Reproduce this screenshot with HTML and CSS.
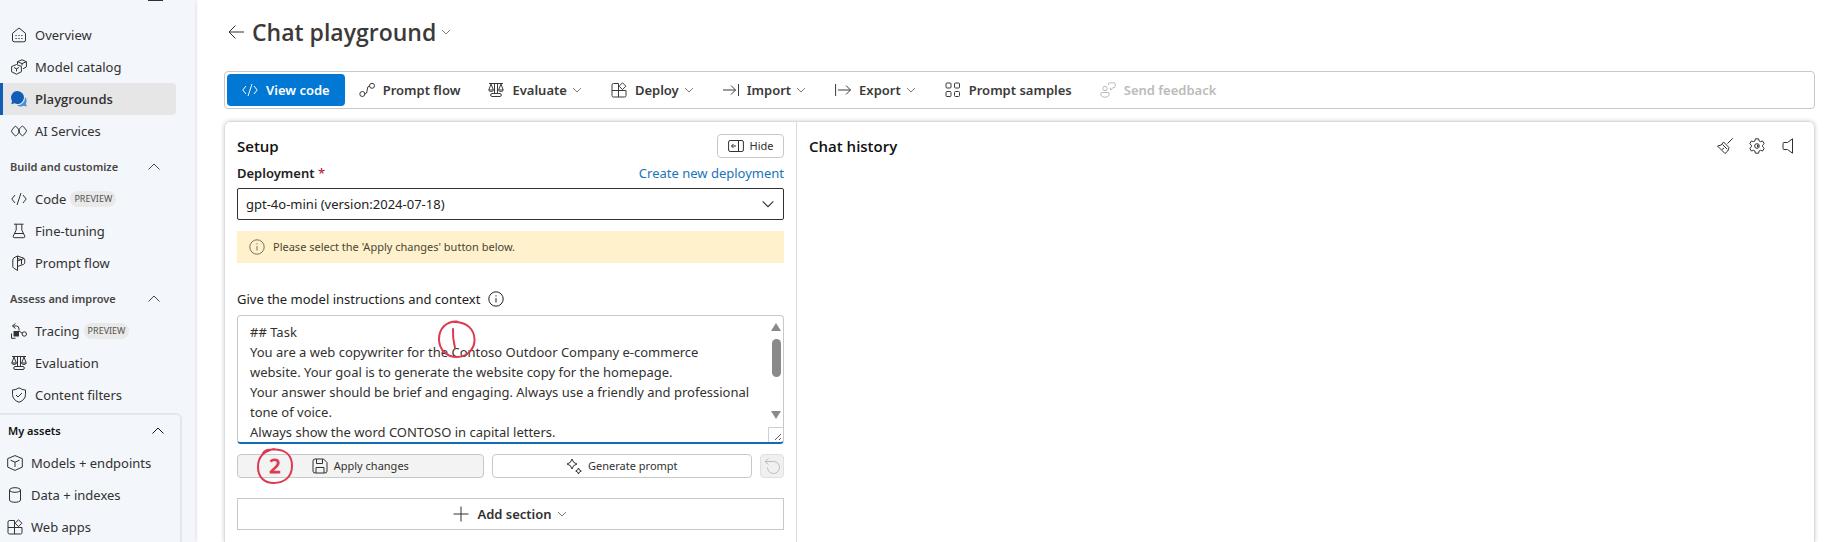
FILE: index.html
```html
<!DOCTYPE html>
<html lang="en">
<head>
<meta charset="utf-8">
<title>Chat playground</title>
<link rel="stylesheet" href="styles.css">
</head>
<body>
<svg class="defs" aria-hidden="true">
  <symbol id="chev-down" viewBox="0 0 12 12"><path d="M2 4l4 4 4-4"/></symbol>
  <symbol id="chev-up" viewBox="0 0 12 12"><path d="M.5 8.5L6 3l5.500 5.500"/></symbol>
  <symbol id="code" viewBox="0 0 16 16"><path d="M4 4L.8 8 4 12M12 4l3.200 4L12 12M10 2L6 14"/></symbol>
  <symbol id="scales" viewBox="0 0 16 16"><path d="M1 1.500h14M6.500 1.500v10M9.500 1.500v10M3 2L.8 8h4.600L3 2zM13 2l-2.400 6h4.600L13 2zM.8 8c0 2 4.600 2 4.600 0M10.600 8c0 2 4.600 2 4.600 0M4 11.500h8c1.800 0 1.800 3 0 3H4c-1.800 0-1.800-3 0-3z"/></symbol>
  <symbol id="apps" viewBox="0 0 16 16"><path d="M7.500 1.500h-5Q1 1.500 1 3v10.500Q1 15 2.500 15h11q1.500 0 1.500-1.500V8.500H1M7.500 1.500V15M11.500.8l3.400 3.400-3.400 3.400-3.400-3.400z"/></symbol>
  <symbol id="info" viewBox="0 0 16 16"><circle cx="8" cy="8" r="7.200"/><path d="M8 7v4.500M8 4.300v1.200"/></symbol>
</svg>
<div class="shell">
  <nav class="sidebar" aria-label="Project">
    <div class="sidebar-top"><span class="collapse-mark"></span></div>
    <a class="nav-item" href="#"><svg class="icon" viewBox="0 0 16 16"><path d="M1.500 6.300L8 1l6.500 5.300V13q0 1.800-1.800 1.800H3.300Q1.500 14.800 1.500 13z"/><path d="M4.500 8.500h1.200M7.400 8.500h1.200M10.300 8.500h1.200M4.500 11.500h1.200M7.400 11.500h1.200M10.300 11.500h1.200"/></svg>Overview</a>
    <a class="nav-item" href="#"><svg class="icon" viewBox="0 0 16 16"><path d="M.6 7.500L5.500 5.500l4.900 2v5.300l-4.900 2.400-4.900-2.400zM3 8.500l2.500 1.300L8 8.500M5.500 9.800v2.500M6.500 5V2.700L11 .8l4.400 1.900v5.200L12 9.800M6.500 2.700L11 4.600l4.400-1.900M11 4.600v2"/></svg>Model catalog</a>
    <a class="nav-item selected" href="#" aria-current="page"><svg class="icon" viewBox="0 0 16 16"><path class="fill" d="M6.500 0a6.500 6.500 0 1 1-3 12.300L.2 13.200l.9-3.200A6.500 6.500 0 0 1 6.500 0z"/><path class="fill pale" d="M14 6a6 6 0 0 1 1 6.500l.8 3-3.100-.8A6.500 6.500 0 0 1 6 14.300 7.600 7.600 0 0 0 14 6z"/></svg>Playgrounds</a>
    <a class="nav-item" href="#"><svg class="icon" viewBox="0 0 16 16"><path d="M6.500 11.500L5.300 12.500q-.8.600-1.600 0L.8 9q-.6-.9 0-1.800l2.900-3.600q.8-.7 1.600 0l3 3.600q.6.900 0 1.800zM9.500 4.500l1.200-1q.8-.6 1.600 0L15.200 7q.6.900 0 1.800l-2.900 3.600q-.8.700-1.600 0l-3-3.600q-.6-.9 0-1.800z"/></svg>AI Services</a>
    <button class="nav-head" type="button">Build and customize<svg class="caret"><use href="#chev-up"/></svg></button>
    <a class="nav-item" href="#"><svg class="icon"><use href="#code"/></svg>Code<span class="tag">PREVIEW</span></a>
    <a class="nav-item" href="#"><svg class="icon" viewBox="0 0 16 16"><path d="M3 1.200h9.500M5.200 1.200V7l-3 6.200q-.3 1.200.9 1.500h9.800q1.200-.3.900-1.500l-3-6.200V1.200M3.600 10.500h8.800"/></svg>Fine-tuning</a>
    <a class="nav-item" href="#"><svg class="icon" viewBox="0 0 16 16"><path d="M6.500 1L3 2.800Q1.800 3.500 1.800 5v6.500q0 1 .8 1.500L6.500 15.500zM6.500 1l6.200 2.200q1 .3 1 1.500v3.100q0 1-1 1.500L6.500 11.500M6.500 6L13 3.500M6.500 3.500l4 1.400v4.500"/></svg>Prompt flow</a>
    <button class="nav-head" type="button">Assess and improve<svg class="caret"><use href="#chev-up"/></svg></button>
    <a class="nav-item" href="#"><svg class="icon" viewBox="0 0 16 16"><path d="M4.500.5L1.500 3l3 2.500M1.500 3h4q2.500 0 2.500 3v1.500M8 8l3.500 2.500M.5 10.500v4.800h4"/><circle cx="13.300" cy="11" r="2.200"/><path class="fill dark" d="M2.500 8h5.500v5.500H2.500z"/></svg>Tracing<span class="tag">PREVIEW</span></a>
    <a class="nav-item" href="#"><svg class="icon"><use href="#scales"/></svg>Evaluation</a>
    <a class="nav-item" href="#"><svg class="icon" viewBox="0 0 16 16"><path d="M8 .8q3 2.200 6.500 2.200v4.500q0 5.300-6.500 7.800Q1.500 12.800 1.500 7.500V3Q5 3 8 .8zM5 8l2 2 4-4"/></svg>Content filters</a>
    <section class="assets">
      <button class="nav-head" type="button">My assets<svg class="caret"><use href="#chev-up"/></svg></button>
      <a class="nav-item" href="#"><svg class="icon" viewBox="0 0 16 16"><path d="M8 .6l7.300 3v8.500L8 15.400.7 12.100V3.600zM3.500 5.200L8 7.200l4.500-2M8 7.200V12"/></svg>Models + endpoints</a>
      <a class="nav-item" href="#"><svg class="icon" viewBox="0 0 16 16"><ellipse cx="8" cy="3" rx="5.500" ry="2.300"/><path d="M2.500 3v10c0 3 11 3 11 0V3"/></svg>Data + indexes</a>
      <a class="nav-item" href="#"><svg class="icon"><use href="#apps"/></svg>Web apps</a>
    </section>
  </nav>

  <main class="main">
    <header class="title-row">
      <button class="back" type="button" aria-label="Back"><svg class="icon" viewBox="0 0 16 16"><path d="M7.500 1.500L1 8l6.500 6.500M1 8h15"/></svg></button>
      <h1>Chat playground</h1>
      <svg class="chev"><use href="#chev-down"/></svg>
    </header>

    <div class="toolbar" role="toolbar">
      <button class="tool primary" type="button"><svg class="icon"><use href="#code"/></svg>View code</button>
      <button class="tool" type="button"><svg class="icon" viewBox="0 0 16 16"><circle cx="3.300" cy="12" r="2.500"/><circle cx="13" cy="3.800" r="2.500"/><path d="M5.800 12q2.400 0 2.400-4t2.400-4.200"/></svg>Prompt flow</button>
      <button class="tool" type="button"><svg class="icon"><use href="#scales"/></svg>Evaluate<svg class="chev"><use href="#chev-down"/></svg></button>
      <button class="tool" type="button"><svg class="icon"><use href="#apps"/></svg>Deploy<svg class="chev"><use href="#chev-down"/></svg></button>
      <button class="tool" type="button"><svg class="icon" viewBox="0 0 16 16"><path d="M0 8h12.500M8 3.500L12.500 8 8 12.500M15.500 2v12"/></svg>Import<svg class="chev"><use href="#chev-down"/></svg></button>
      <button class="tool" type="button"><svg class="icon" viewBox="0 0 16 16"><path d="M.6 2v12M3 8h12.500M11 3.500L15.500 8 11 12.500"/></svg>Export<svg class="chev"><use href="#chev-down"/></svg></button>
      <button class="tool" type="button"><svg class="icon" viewBox="0 0 16 16"><rect x="1" y="1" width="5" height="5" rx="1"/><rect x="9.500" y="1" width="5" height="5" rx="1"/><rect x="1" y="9.500" width="5" height="5" rx="1"/><rect x="9.500" y="9.500" width="5" height="5" rx="1"/></svg>Prompt samples</button>
      <button class="tool" type="button" disabled><svg class="icon" viewBox="0 0 16 16"><circle cx="5" cy="6.500" r="2.200"/><path d="M2 10.500h6q1.200 0 1.200 1.200 0 3.500-4.200 3.500T.8 11.700Q.8 10.500 2 10.500zM8.500 3V2q0-1.200 1.200-1.200H14q1.200 0 1.200 1.200v2.500q0 1.200-1.200 1.200h-1L10.500 8V5.700"/></svg>Send feedback</button>
    </div>

    <div class="card">
      <section class="setup">
        <div class="row">
          <h2>Setup</h2>
          <button class="small-btn hide" type="button"><svg class="icon" viewBox="0 0 16 16"><rect x=".6" y="2.500" width="14.800" height="11" rx="1.500"/><path d="M10.500 2.500v11M3.500 8H8M5.500 6L3.500 8l2 2"/></svg>Hide</button>
        </div>
        <div class="row deploy-row">
          <label class="field-label" for="deployment">Deployment <span class="req">*</span></label>
          <a class="link" href="#">Create new deployment</a>
        </div>
        <div class="select-wrap">
          <select id="deployment"><option>gpt-4o-mini (version:2024-07-18)</option></select>
          <svg class="select-caret"><use href="#chev-down"/></svg>
        </div>
        <div class="notice" role="status"><svg class="icon"><use href="#info"/></svg>Please select the 'Apply changes' button below.</div>
        <div class="prompt-label"><label for="instructions">Give the model instructions and context</label><svg class="icon"><use href="#info"/></svg></div>
        <div class="prompt-box">
          <textarea id="instructions" rows="6">## Task
You are a web copywriter for the Contoso Outdoor Company e-commerce
website. Your goal is to generate the website copy for the homepage.
Your answer should be brief and engaging. Always use a friendly and professional
tone of voice.
Always show the word CONTOSO in capital letters.</textarea>
          <div class="scrollbar" aria-hidden="true"><span class="arrow up"></span><span class="thumb"></span><span class="arrow down"></span></div>
          <svg class="grip" viewBox="0 0 15 15" aria-hidden="true"><path class="grip-edge" d="M.5 15V.5H15"/><path d="M7 13l6-6M11 13l2-2"/></svg>
          <svg class="mark mark-one" viewBox="0 0 40 40" role="img" aria-label="Step 1"><path d="M20 2.500C9 2 2 10 2 20s7 18 18 18 18-9 17.500-18S31 3 17 3"/><path d="M16 10q-.5 9 2 19"/></svg>
        </div>
        <div class="actions">
          <button class="small-btn apply" type="button"><svg class="icon" viewBox="0 0 16 16"><path d="M1 3q0-2 2-2h8.500L15 4.500V13q0 2-2 2H3q-2 0-2-2zM4.500 1v4.500h6V1M4 15V9.500h8V15"/></svg>Apply changes</button>
          <button class="small-btn generate" type="button"><svg class="icon" viewBox="0 0 16 16"><path d="M6 1q.8 4.200 5 5-4.200.8-5 5-.8-4.200-5-5 4.200-.8 5-5zM12.500 10q.5 2.500 2.800 3-2.300.5-2.800 3-.5-2.500-2.800-3 2.300-.5 2.800-3z"/></svg>Generate prompt</button>
          <button class="small-btn undo" type="button" disabled aria-label="Undo"><svg class="icon" viewBox="0 0 16 16"><path d="M4.500.5L1 3.500l3.500 3M1 3.500h8.500a6 6 0 1 1-6 6"/></svg></button>
          <svg class="mark mark-two" viewBox="0 0 40 40" role="img" aria-label="Step 2"><path d="M19 3C9 5 3 11 3 21s6 16 16 16 18-6 18-17S30 4 21 3.500 9 4 7 9"/><text x="20" y="27">2</text></svg>
        </div>
        <button class="add" type="button"><svg class="icon" viewBox="0 0 16 16"><path d="M8 .5v15M.5 8h15"/></svg>Add section<svg class="chev"><use href="#chev-down"/></svg></button>
      </section>
      <section class="history">
        <h2>Chat history</h2>
        <div class="history-tools">
          <button type="button" aria-label="Clear chat"><svg class="icon" viewBox="0 0 16 16"><path d="M15.800.3L10.500 5.500M6.500 4l5.500 5.500q-.5 4-4 6L.5 8q4.500 0 6-4zM5.500 6.500L10 11M5 11.500l2-1.500"/></svg></button>
          <button type="button" aria-label="Settings"><svg class="icon" viewBox="0 0 16 16"><path d="M6.400.8h3.200l.5 2.200 1.300.7 2.200-.7 1.600 2.700L13.600 7.200v1.600l1.600 1.500-1.600 2.700-2.200-.7-1.300.7-.5 2.200H6.400L5.900 13l-1.300-.7-2.200.7-1.600-2.700 1.600-1.500V7.200L.8 5.700 2.400 3l2.200.7L5.900 3z"/><circle cx="8" cy="8" r="2.300"/><path class="fill dark" d="M8 6.500v3L10 8z"/></svg></button>
          <button type="button" aria-label="Speech"><svg class="icon" viewBox="0 0 16 16"><path d="M11.500.8v14.400L6.500 11.500H3q-1 0-1-1v-5q0-1 1-1h3.500z"/></svg></button>
        </div>
      </section>
    </div>
  </main>
</div>
</body>
</html>
```
FILE: styles.css
```css
* { box-sizing: border-box; }

body {
  margin: 0;
  background: #fff;
  color: #323130;
  font: 13px/20px "Noto Sans", "Open Sans", sans-serif;
}

h1, h2 { margin: 0; font-weight: 600; }

button, select, textarea { font: inherit; color: inherit; }
button { background: none; border: 0; padding: 0; }

svg { fill: none; stroke: currentColor; flex: none; }
.defs { position: absolute; width: 0; height: 0; }
.icon { width: 16px; height: 16px; }
.chev { width: 12px; height: 12px; stroke-width: .8; color: #605e5c; }
.fill { fill: #0f5fb8; stroke: none; }
.fill.pale { fill: #4a90d6; }
.fill.dark { fill: #323130; }

.shell { display: flex; height: 100vh; overflow: hidden; }

/* Sidebar */
.sidebar {
  flex: 0 0 195px;
  background: #f3f6fb;
  box-shadow: 0 0 4px rgba(0, 0, 0, .22);
}
.sidebar-top {
  display: flex;
  justify-content: flex-end;
  align-items: flex-start;
  height: 19px;
  padding-right: 32px;
}
.collapse-mark { width: 15px; height: 1px; background: #323130; }
.nav-item {
  display: flex;
  align-items: center;
  height: 32px;
  width: 176px;
  padding-left: 11px;
  gap: 8px;
  color: #323130;
  text-decoration: none;
  white-space: nowrap;
}
.nav-item.selected {
  background: #e6e6e7;
  border-left: 3px solid #0f5fb8;
  border-radius: 0 4px 4px 0;
  padding-left: 8px;
  font-family: "Open Sans", sans-serif;
  font-weight: 600;
}
.tag {
  margin-left: -4px;
  padding: 0 4px;
  border-radius: 8px;
  background: #e9e9ea;
  color: #55534f;
  font-size: 9px;
  line-height: 16px;
}
.nav-head {
  display: flex;
  align-items: center;
  justify-content: space-between;
  width: 150px;
  height: 32px;
  margin: 4px 0 0 10px;
  font-size: 11px;
  font-weight: 600;
  color: #484644;
}
.caret { width: 12px; height: 12px; }
.assets {
  width: 182px;
  margin-top: 2px;
  padding-bottom: 8px;
  border: 2px solid #e3e6eb;
  border-left: 0;
  border-radius: 0 6px 6px 0;
}
.assets .nav-head { width: 156px; margin: 0 0 0 8px; color: #111; }
.assets .nav-item { padding-left: 7px; }

/* Main column */
.main {
  flex: 1;
  min-width: 0;
  display: flex;
  flex-direction: column;
  padding: 12px 22px 0 29px;
}
.title-row { display: flex; align-items: center; height: 40px; gap: 8px; padding-left: 4px; }
.title-row h1 { font-family: "Open Sans", sans-serif; font-size: 23px; line-height: 32px; color: #3b3a39; }
.title-row .chev { margin-left: -4px; }
.back { display: flex; }

.toolbar {
  display: flex;
  align-items: center;
  height: 38px;
  margin-top: 19px;
  padding: 0 2px;
  border: 1px solid #c8c8c8;
  border-radius: 4px;
}
.tool {
  display: flex;
  align-items: center;
  height: 32px;
  padding: 0 14px;
  gap: 8px;
  border-radius: 4px;
  font-weight: 600;
  white-space: nowrap;
  color: #3b3a39;
}
.tool .chev { margin-left: -4px; }
.tool.primary { padding: 0 15px; background: #0078d4; color: #fff; }
.tool:disabled { color: #bdbbb9; }

.card {
  flex: 1;
  display: flex;
  margin-top: 12px;
  border: 1px solid #dcdcdc;
  border-bottom: 0;
  border-radius: 6px 6px 0 0;
  box-shadow: 0 0 4px rgba(0, 0, 0, .2);
}
.card h2 { font-family: "Open Sans", sans-serif; font-size: 15px; color: #111; }

.setup {
  flex: 0 0 36%;
  padding: 12px 12px 12px 12px;
  border-right: 1px solid #dcdcdc;
}
.row { display: flex; align-items: center; justify-content: space-between; }
.small-btn {
  display: flex;
  align-items: center;
  justify-content: center;
  height: 24px;
  gap: 6px;
  border: 1px solid #c8c8c8;
  border-radius: 4px;
  background: #fff;
  font-size: 11px;
}
.hide { width: 67px; }
.deploy-row { margin-top: 5px; }
.field-label { font-weight: 600; color: #222; }
.req { color: #b10e1c; font-weight: 400; }
.link { color: #1a74b8; text-decoration: none; }

.select-wrap { position: relative; margin-top: 5px; }
.select-wrap select {
  display: block;
  width: 100%;
  height: 32px;
  padding: 0 8px;
  border: 1px solid #323130;
  border-radius: 2px;
  background: #fff;
  appearance: none;
  color: #222;
}
.select-caret { position: absolute; right: 8px; top: 8px; width: 16px; height: 16px; stroke-width: .8; }

.notice {
  display: flex;
  align-items: center;
  height: 32px;
  margin-top: 11px;
  padding: 0 12px;
  gap: 8px;
  background: #fff1cc;
  color: #4a4535;
  font-size: 11px;
}
.notice .icon { color: #7a7260; }
.prompt-label { display: flex; align-items: center; gap: 8px; margin-top: 26px; color: #222; }

.prompt-box { position: relative; margin-top: 6px; }
.prompt-box textarea {
  display: block;
  width: 100%;
  height: 129px;
  padding: 6px 24px 0 12px;
  border: 1px solid #c8c8c8;
  border-bottom: 2px solid #0f6cbd;
  border-radius: 4px;
  outline: 0;
  resize: none;
  overflow: hidden;
  line-height: 20px;
}
.scrollbar {
  position: absolute;
  top: 8px;
  right: 3px;
  display: flex;
  flex-direction: column;
  align-items: center;
  width: 10px;
  height: 96px;
}
.arrow { border: 5px solid transparent; }
.arrow.up { border-top: 0; border-bottom: 8px solid #8a8a8a; }
.arrow.down { border-bottom: 0; border-top: 8px solid #8a8a8a; margin-top: auto; }
.thumb { width: 9px; height: 38px; margin-top: 8px; border-radius: 5px; background: #8a8a8a; }
.grip { position: absolute; right: 1px; bottom: 2px; width: 15px; height: 15px; stroke: #605e5c; }
.grip-edge { stroke: #d0d0d0; }

.mark { position: absolute; width: 40px; height: 40px; stroke: #dc3a50; stroke-width: 2; stroke-linecap: round; }
.mark text {
  fill: #dc3a50;
  stroke-width: 1;
  font-size: 20px;
  text-anchor: middle;
}
.mark-one { left: 200px; top: 4px; }
.mark-two { left: 18px; top: -8px; }

.actions { position: relative; display: flex; gap: 8px; margin-top: 10px; }
.apply { flex: 247; background: #f3f3f3; }
.generate { flex: 261; }
.undo { flex: 0 0 24px; background: #f0f0f0; border-color: #e0e0e0; color: #bdbdbd; }

.add {
  display: flex;
  align-items: center;
  justify-content: center;
  width: 100%;
  height: 32px;
  margin-top: 20px;
  gap: 8px;
  border: 1px solid #c8c8c8;
  font-weight: 600;
}
.add .chev { margin-left: -4px; }

.history {
  flex: 1;
  display: flex;
  justify-content: space-between;
  align-items: flex-start;
  padding: 12px 17px 0 12px;
}
.history h2 { line-height: 24px; }
.history-tools { display: flex; gap: 16px; padding-top: 4px; }
.history-tools button { display: flex; }
```
